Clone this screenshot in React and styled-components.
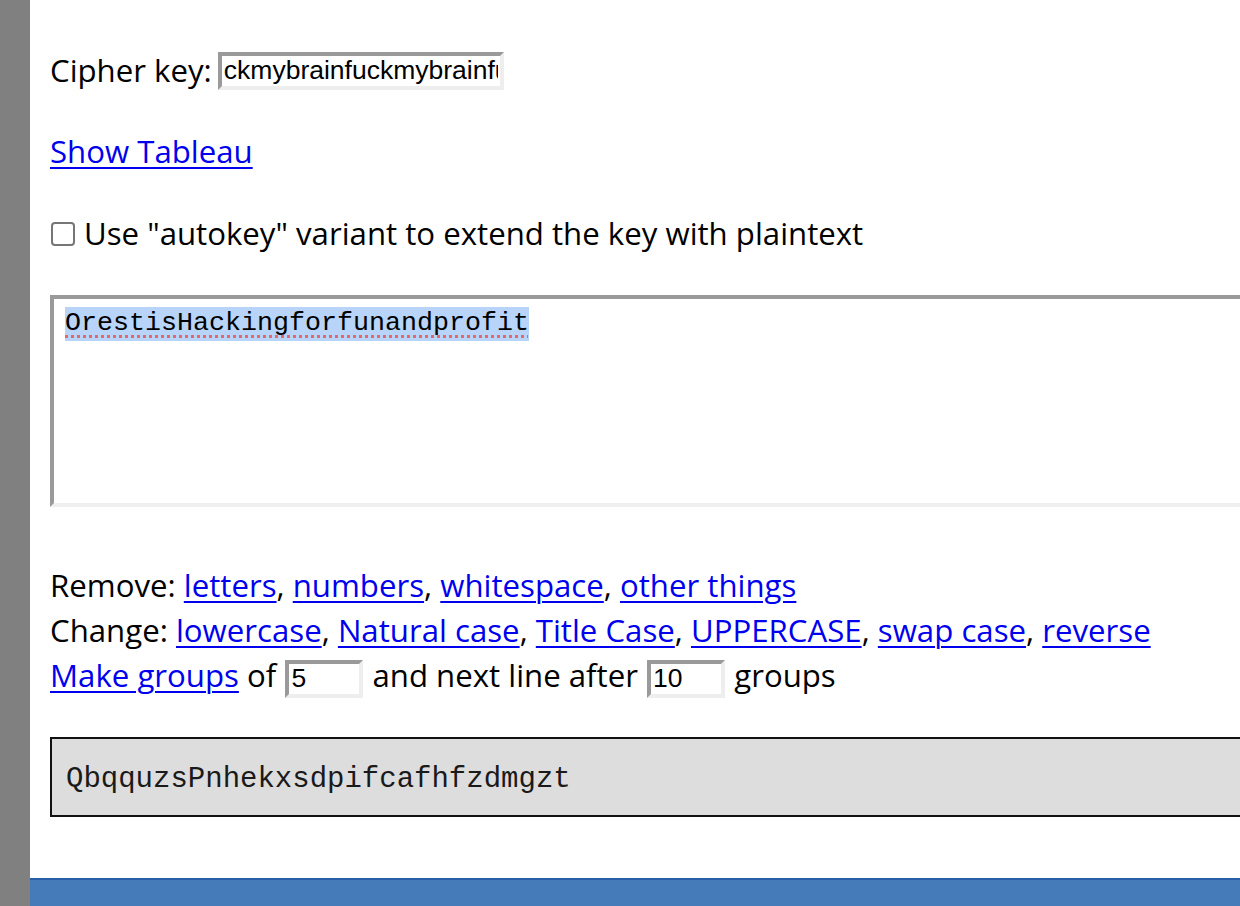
import React from 'react';
import styled, { createGlobalStyle } from 'styled-components';

const GlobalStyle = createGlobalStyle`
  html, body {
    margin: 0;
    padding: 0;
    background: #808080;
    overflow: hidden;
  }
`;

const KEY_VALUE = 'ckmybrainfuckmybrainfuck';
const PLAINTEXT = 'OrestisHackingforfunandprofit';
const CIPHERTEXT = 'QbqquzsPnhekxsdpifcafhfzdmgzt';

const App = () => {
  return (
    <>
      <GlobalStyle />
      <StyledPanel>
        <StyledContent>
          <StyledKeyRow>
            <label htmlFor="key">Cipher key:</label>
            <StyledTextInput id="key" width={286} defaultValue={KEY_VALUE} readOnly />
          </StyledKeyRow>

          <StyledPara gap={36}>
            <StyledLink href="#tableau">Show Tableau</StyledLink>
          </StyledPara>

          <StyledCheckRow>
            <StyledCheckbox type="checkbox" id="autokey" />
            <label htmlFor="autokey">Use "autokey" variant to extend the key with plaintext</label>
          </StyledCheckRow>

          <StyledEditor>
            <StyledSelected>{PLAINTEXT}</StyledSelected>
          </StyledEditor>

          <StyledTools>
            <div>
              Remove: <StyledLink href="#l">letters</StyledLink>, <StyledLink href="#n">numbers</StyledLink>,{' '}
              <StyledLink href="#w">whitespace</StyledLink>, <StyledLink href="#o">other things</StyledLink>
            </div>
            <div>
              Change: <StyledLink href="#lc">lowercase</StyledLink>, <StyledLink href="#nc">Natural case</StyledLink>,{' '}
              <StyledLink href="#tc">Title Case</StyledLink>, <StyledLink href="#uc">UPPERCASE</StyledLink>,{' '}
              <StyledLink href="#sc">swap case</StyledLink>, <StyledLink href="#rv">reverse</StyledLink>
            </div>
            <div>
              <StyledLink href="#g">Make groups</StyledLink> of <StyledTextInput width={78} defaultValue="5" readOnly />{' '}
              and next line after <StyledTextInput width={78} defaultValue="10" readOnly /> groups
            </div>
          </StyledTools>

          <StyledOutput>{CIPHERTEXT}</StyledOutput>
        </StyledContent>

        <StyledFooter />
      </StyledPanel>
    </>
  );
};

export default App;

const StyledPanel = styled.div`
  margin-left: 30px;
  width: 1320px;
  min-height: 906px;
  background: #fff;
  display: flex;
  flex-direction: column;
`;

const StyledContent = styled.div`
  display: flex;
  flex-direction: column;
  align-items: flex-start;
  padding: 48px 0 0 20px;
  font-family: "Open Sans", "Noto Sans", sans-serif;
  font-size: 31.2px;
  line-height: 45px;
  color: #000;
`;

const StyledKeyRow = styled.div`
  display: flex;
  align-items: center;
  gap: 5px;
  height: 45px;
`;

const StyledPara = styled.p`
  margin: ${(p) => p.gap}px 0 0;
`;

const StyledLink = styled.a`
  color: #0000ee;
  text-decoration: underline;
  text-decoration-thickness: 2px;
  text-underline-offset: 4px;
`;

const StyledTextInput = styled.input`
  box-sizing: border-box;
  width: ${(p) => p.width}px;
  height: 38px;
  margin: 0 1px;
  padding: 0 2px;
  border: 4px solid;
  border-color: #9a9a9a #eeeeee #eeeeee #9a9a9a;
  background: #fff;
  font-family: "Liberation Sans", Arial, sans-serif;
  font-size: 26.5px;
  color: #000;
  vertical-align: middle;
  outline: none;
`;

const StyledCheckRow = styled.div`
  display: flex;
  align-items: center;
  gap: 9px;
  height: 45px;
  margin-top: 37px;
`;

const StyledCheckbox = styled.input`
  appearance: none;
  box-sizing: border-box;
  width: 24px;
  height: 24px;
  margin: 0 0 0 1px;
  border: 2px solid #767676;
  border-radius: 4px;
  background: #fff;
`;

const StyledEditor = styled.div`
  box-sizing: border-box;
  width: 1300px;
  height: 212px;
  margin-top: 39px;
  padding: 8px 11px;
  border: 4px solid;
  border-color: #9a9a9a #efefef #efefef #9a9a9a;
  font-family: "Liberation Mono", "Courier New", monospace;
  font-size: 26.67px;
  line-height: 32px;
  color: #000;
`;

const StyledSelected = styled.span`
  background: #b8d4f8;
  padding: 1px 0 3px;
  text-decoration: underline dotted #e06a6a;
  text-decoration-thickness: 3px;
  text-underline-offset: 5px;
  text-decoration-skip-ink: none;
`;

const StyledTools = styled.div`
  margin-top: 56px;
`;

const StyledOutput = styled.div`
  box-sizing: border-box;
  width: 1300px;
  height: 80px;
  margin-top: 39px;
  padding: 23px 14px 17px;
  border: 2px solid #111;
  background: #dddddd;
  font-family: "Liberation Mono", "Courier New", monospace;
  font-size: 29px;
  line-height: 36px;
  color: #1a1a1a;
`;

const StyledFooter = styled.div`
  margin-top: 61px;
  flex: 1;
  min-height: 26px;
  border-top: 2px solid #2a5ea6;
  background: #467bb9;
`;
